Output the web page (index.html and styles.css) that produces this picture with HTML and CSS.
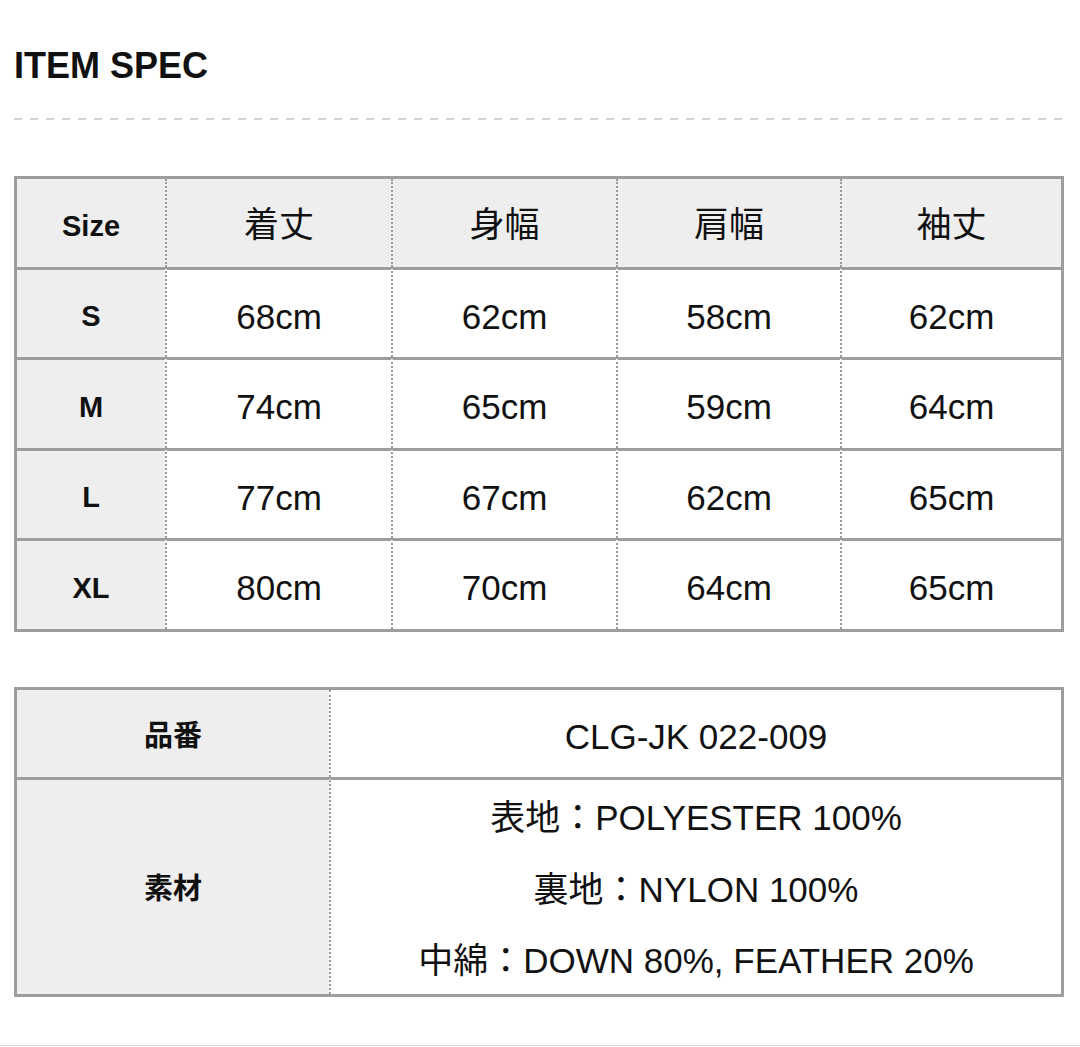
FILE: index.html
```html
<!DOCTYPE html>
<html lang="ja">
<head>
<meta charset="utf-8">
<title>ITEM SPEC</title>
<link rel="stylesheet" href="styles.css">
</head>
<body>
<div class="page">
  <h1 class="title">ITEM SPEC</h1>
  <div class="dash"></div>

  <div class="spec">
    <div class="c hd first">Size</div>
    <div class="c hd jp">着丈</div>
    <div class="c hd jp">身幅</div>
    <div class="c hd jp">肩幅</div>
    <div class="c hd jp">袖丈</div>

    <div class="c sz first row">S</div>
    <div class="c row">68cm</div>
    <div class="c row">62cm</div>
    <div class="c row">58cm</div>
    <div class="c row">62cm</div>

    <div class="c sz first row">M</div>
    <div class="c row">74cm</div>
    <div class="c row">65cm</div>
    <div class="c row">59cm</div>
    <div class="c row">64cm</div>

    <div class="c sz first row">L</div>
    <div class="c row">77cm</div>
    <div class="c row">67cm</div>
    <div class="c row">62cm</div>
    <div class="c row">65cm</div>

    <div class="c sz first row">XL</div>
    <div class="c row">80cm</div>
    <div class="c row">70cm</div>
    <div class="c row">64cm</div>
    <div class="c row">65cm</div>
  </div>

  <div class="info">
    <div class="c sz first jp">品番</div>
    <div class="c">CLG-JK 022-009</div>
    <div class="c sz first row jp">素材</div>
    <div class="c row material">
      <span>表地：POLYESTER 100%</span>
      <span>裏地：NYLON 100%</span>
      <span>中綿：DOWN 80%, FEATHER 20%</span>
    </div>
  </div>
</div>
<div class="bottom-rule"></div>
</body>
</html>
```

FILE: styles.css
```css
html, body {
  margin: 0;
  padding: 0;
  background: #ffffff;
}

body {
  font-family: "Liberation Sans", "Noto Sans CJK JP", sans-serif;
  color: #111111;
}

.page {
  padding: 0 16px 0 14px;
}

.title {
  margin: 0;
  padding-top: 48px;
  font-size: 36px;
  line-height: 36px;
  font-weight: bold;
}

.dash {
  margin-top: 34px;
  height: 2px;
  width: 1051px;
  background: repeating-linear-gradient(to right, #d2d2d2 0 8px, transparent 8px 16px);
}

.spec,
.info {
  display: grid;
  width: 1050px;
  box-sizing: border-box;
  border: 3px solid #9d9d9d;
}

.spec {
  margin-top: 56px;
  grid-template-columns: 148px 226px 225px 224px 221px;
  grid-template-rows: 88px 90px 91px 90px 91px;
}

.info {
  margin-top: 55px;
  grid-template-columns: 312px 732px;
  grid-template-rows: 87px 217px;
}

.c {
  box-sizing: border-box;
  display: flex;
  align-items: center;
  justify-content: center;
  padding-top: 6px;
  font-size: 35px;
  background: #ffffff;
  border-left: 2px dotted #9a9a9a;
}

.c.first {
  border-left: none;
  background: #eeeeee;
}

.c.hd {
  background: #eeeeee;
}

.c.row {
  border-top: 3px solid #9d9d9d;
}

.c.sz,
.c.hd.first {
  font-size: 29px;
  font-weight: bold;
}

.c.jp {
  padding-top: 0;
  padding-bottom: 4px;
}

.c.sz.jp {
  padding-bottom: 2px;
}

.material {
  flex-direction: column;
  line-height: 71.5px;
  padding-top: 5px;
}

.bottom-rule {
  margin-top: 48px;
  height: 1px;
  background: #d4d4d4;
}
```
